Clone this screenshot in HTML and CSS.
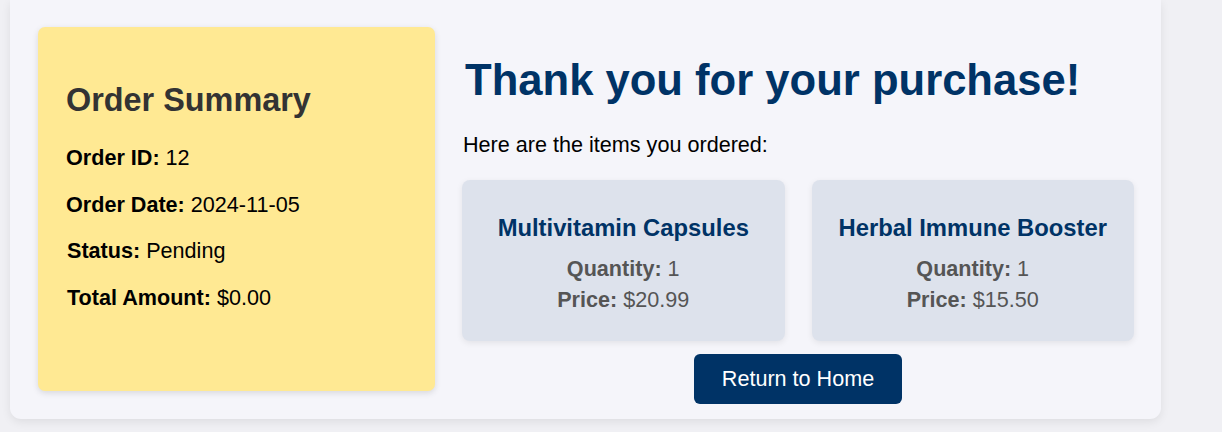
FILE: index.html
```html
<!DOCTYPE html>
<html lang="en">
<head>
<meta charset="utf-8">
<title>Order Confirmation</title>
<link rel="stylesheet" href="styles.css">
</head>
<body>
<div class="container">
  <div class="summary">
    <h2>Order Summary</h2>
    <p><strong>Order ID:</strong> 12</p>
    <p><strong>Order Date:</strong> 2024-11-05</p>
    <p class="shift"><strong>Status:</strong> Pending</p>
    <p class="shift"><strong>Total Amount:</strong> $0.00</p>
  </div>
  <div class="main">
    <h1>Thank you for your purchase!</h1>
    <p class="intro">Here are the items you ordered:</p>
    <div class="items">
      <div class="item">
        <h3>Multivitamin Capsules</h3>
        <p><strong>Quantity:</strong> 1</p>
        <p><strong>Price:</strong> $20.99</p>
      </div>
      <div class="item">
        <h3>Herbal Immune Booster</h3>
        <p><strong>Quantity:</strong> 1</p>
        <p><strong>Price:</strong> $15.50</p>
      </div>
    </div>
    <div class="actions">
      <a class="btn" href="#">Return to Home</a>
    </div>
  </div>
</div>
</body>
</html>
```

FILE: styles.css
```css
html, body {
  margin: 0;
  padding: 0;
}
body {
  background: #f0f0f4;
  font-family: "Liberation Sans", Arial, sans-serif;
  font-size: 21.6px;
  color: #000;
  height: 432px;
  overflow: hidden;
}
.container {
  margin-left: 10px;
  width: 1151px;
  box-sizing: border-box;
  background: #f5f5fa;
  border-radius: 0 0 11px 11px;
  box-shadow: 0 3px 10px rgba(0, 0, 0, 0.08);
  padding: 27px 27px 15px 28px;
  display: flex;
  gap: 27px;
  align-items: stretch;
}
.summary {
  width: 397px;
  flex: none;
  box-sizing: border-box;
  background: #ffe993;
  border-radius: 7px;
  box-shadow: 0 2px 6px rgba(0, 0, 0, 0.12);
  padding: 27px 28px;
  margin-bottom: 13px;
}
.summary h2 {
  font-size: 32.4px;
  margin: 28px 0 26px;
  color: #333;
}
.summary p {
  margin: 20.6px 0;
}
.summary p.shift {
  padding-left: 1px;
}
.main {
  flex: 1;
  min-width: 0;
}
.main h1 {
  font-size: 43.6px;
  color: #003366;
  margin: 29px 0 27px 3px;
}
.intro {
  margin: 0 0 22px 1px;
}
.items {
  display: flex;
  gap: 27px;
}
.item {
  flex: 1;
  background: #dde2ec;
  border-radius: 8px;
  box-shadow: 0 2px 6px rgba(0, 0, 0, 0.08);
  padding: 27px 20px 26px;
  text-align: center;
  color: #555;
}
.item h3 {
  font-size: 23.8px;
  color: #003366;
  margin: 7px 0 11px;
}
.item p {
  margin: 0;
  line-height: 31px;
}
.actions {
  display: flex;
  justify-content: center;
  margin-top: 13px;
}
.btn {
  display: block;
  background: #003366;
  color: #fff;
  text-decoration: none;
  border-radius: 6px;
  padding: 12.6px 27.7px;
  line-height: 24.8px;
}
```
